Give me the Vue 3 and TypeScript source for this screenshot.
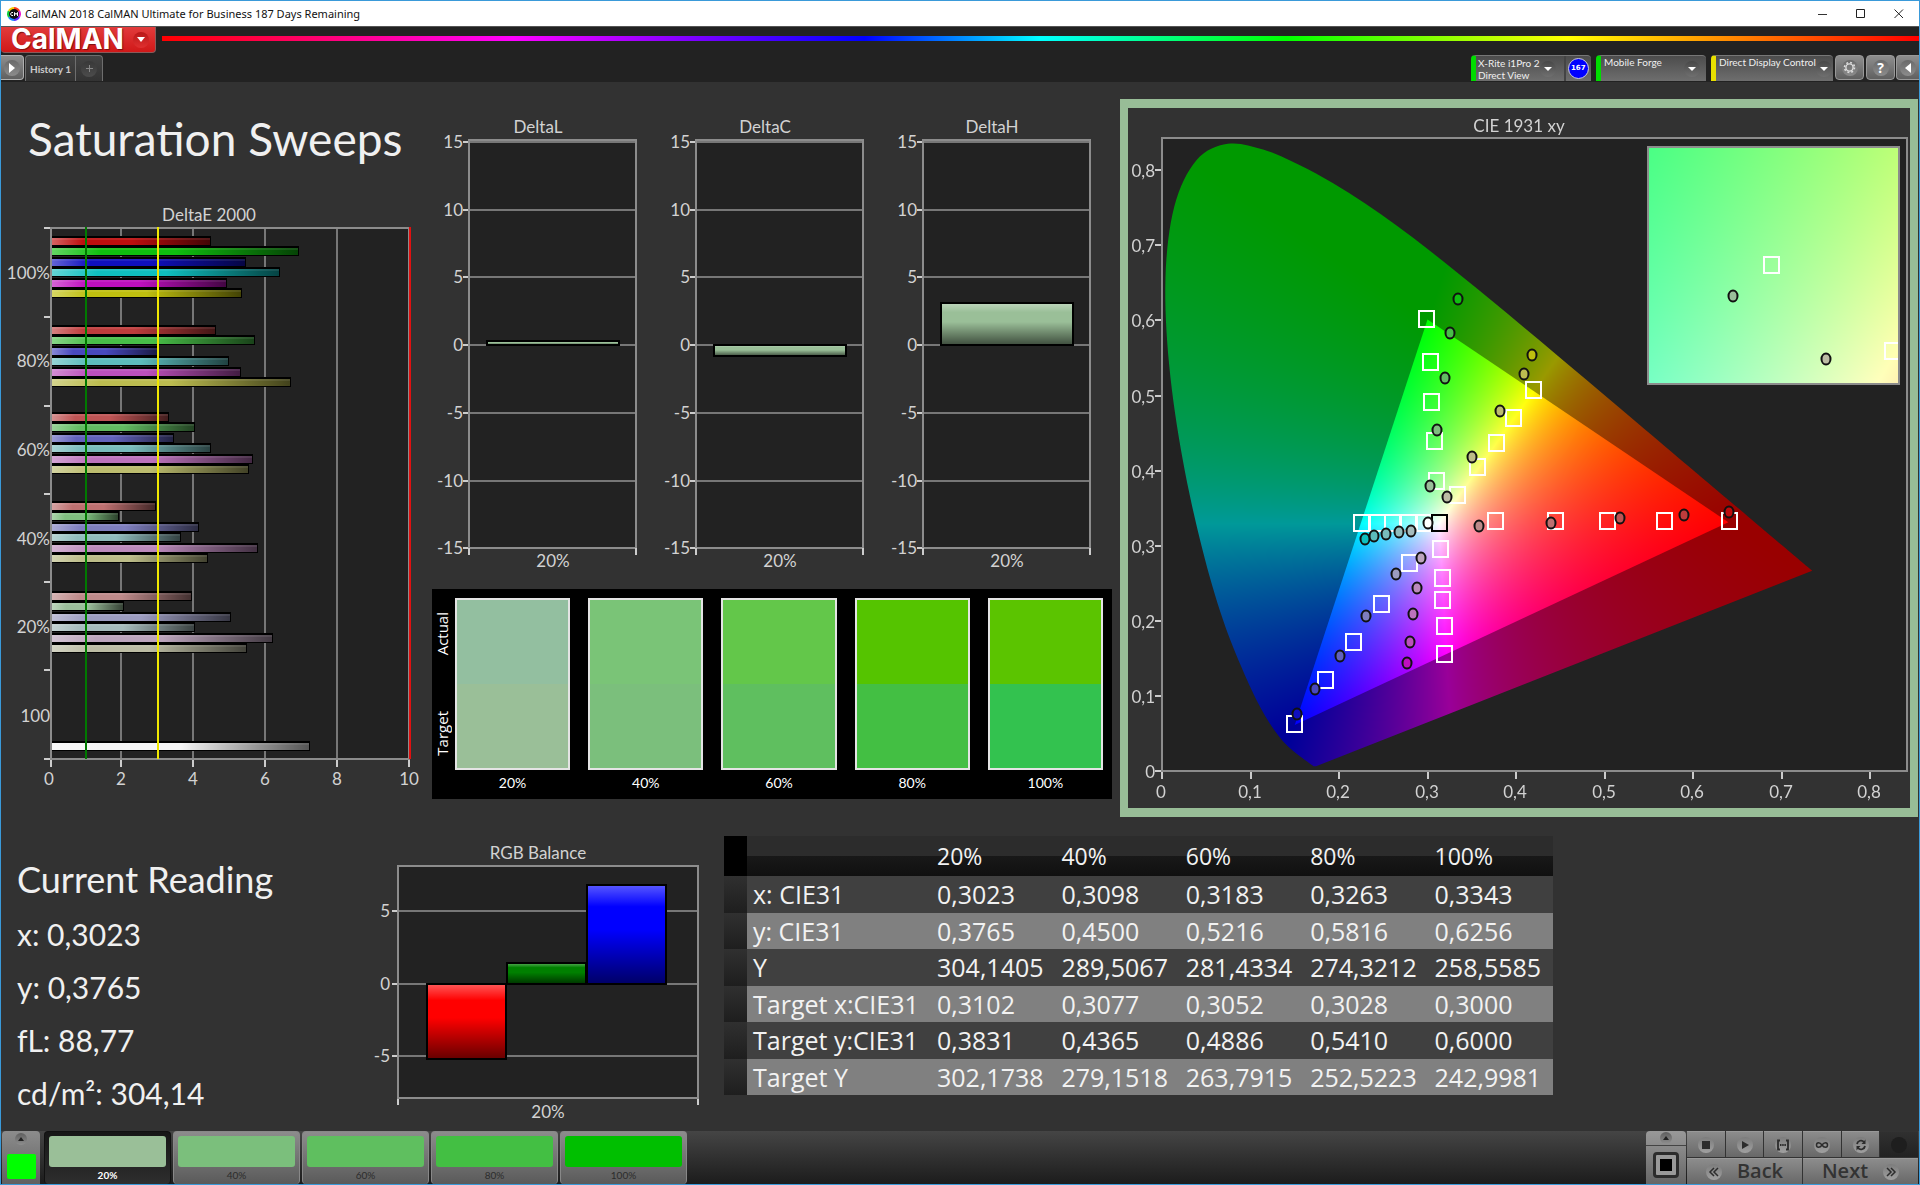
<script setup lang="ts">
import { onMounted, ref } from 'vue'

type Point = [number, number]

// Series order inside every saturation group: red, green, blue, cyan, magenta, yellow
const palette: Record<string, string[]> = {
  '100%': ['#be0e0e', '#0fbf0f', '#0f0fbf', '#0fbfbf', '#bf0fbf', '#bfbf0f'],
  '80%': ['#be3c3c', '#48be48', '#4848be', '#5cbcbc', '#bc50bc', '#bcbc50'],
  '60%': ['#be5454', '#62bc62', '#6262bc', '#78bcbc', '#bc72bc', '#bcbc6e'],
  '40%': ['#be7070', '#7ebe7e', '#7e7ebe', '#90bcbc', '#bc8abc', '#bcbc88'],
  '20%': ['#be8a8a', '#9abe9a', '#9c9cc0', '#a6bcbc', '#bca4bc', '#bcbca4'],
}
const levels = ['100%', '80%', '60%', '40%', '20%']

/* DeltaE 2000 chart */
const deltaE = [
  { label: '100%', top: 37, base: 79, ends: [210, 298, 245, 279, 226, 241] },
  { label: '80%', top: 126, base: 167, ends: [215, 254, 158, 228, 240, 290] },
  { label: '60%', top: 213, base: 256, ends: [168, 194, 173, 210, 252, 248] },
  { label: '40%', top: 302, base: 345, ends: [155, 118, 198, 180, 257, 207] },
  { label: '20%', top: 392, base: 433, ends: [191, 123, 230, 194, 272, 246] },
]
const barOffsets = [0, 10, 21, 31, 42, 52]
const deltaEBars = deltaE.flatMap((g) =>
  g.ends.map((end, i) => ({
    y: g.top + barOffsets[i],
    width: end - 51,
    color: palette[g.label][i],
  })),
)
deltaEBars.push({ y: 542, width: 258, color: '#f4f4f4' })
const groupTicks = [28, 117, 206, 294, 382, 470, 559]

/* DeltaL / DeltaC / DeltaH charts */
const deltaCharts = [
  { title: 'DeltaL', y: 231, height: 4 },
  { title: 'DeltaC', y: 235, height: 11 },
  { title: 'DeltaH', y: 193, height: 42 },
]
const deltaTicks = [
  { label: '15', y: 32 },
  { label: '10', y: 100 },
  { label: '5', y: 167 },
  { label: '0', y: 235 },
  { label: '-5', y: 303 },
  { label: '-10', y: 371 },
  { label: '-15', y: 438 },
]

const swatches = [
  { label: '20%', actual: '#93bfa0', target: '#9abf98' },
  { label: '40%', actual: '#7ac477', target: '#7bbf7c' },
  { label: '60%', actual: '#63c74a', target: '#5fbf5f' },
  { label: '80%', actual: '#55c400', target: '#43bf43' },
  { label: '100%', actual: '#5bc400', target: '#33c24f' },
]

/* CIE 1931 chart */
const cx = (x: number) => Math.round(34 + 885 * x)
const cy = (y: number) => Math.round(663 - 751 * y)

const targets: Point[] = [
  [0.6402, 0.3324], [0.5673, 0.3324], [0.5031, 0.3324], [0.4436, 0.3324], [0.3764, 0.3324],
  [0.2988, 0.6023], [0.3023, 0.5442], [0.3035, 0.4909], [0.3076, 0.4394], [0.3093, 0.3861],
  [0.1488, 0.0626], [0.1838, 0.1207], [0.2154, 0.1718], [0.2475, 0.2224], [0.2796, 0.2765],
  [0.2243, 0.3302], [0.2424, 0.3302], [0.2604, 0.3302], [0.2783, 0.3302], [0.2955, 0.3302],
  [0.3192, 0.1553], [0.3181, 0.1926], [0.3163, 0.2273], [0.3163, 0.2574], [0.3146, 0.2952],
  [0.419, 0.5069], [0.3969, 0.47], [0.377, 0.4372], [0.3554, 0.4043], [0.3338, 0.3675],
]
const measured: Point[][] = [
  [[0.6397, 0.3444], [0.5889, 0.3413], [0.5159, 0.3369], [0.4383, 0.3302], [0.3572, 0.3258]],
  [[0.3338, 0.628], [0.3245, 0.5837], [0.3181, 0.5233], [0.3093, 0.4536], [0.3017, 0.379]],
  [[0.1517, 0.0759], [0.1716, 0.1087], [0.1996, 0.1531], [0.2294, 0.2068], [0.2632, 0.2628]],
  [[0.2282, 0.3089], [0.2387, 0.3134], [0.2515, 0.316], [0.2667, 0.3187], [0.2807, 0.32]],
  [[0.2755, 0.1434], [0.279, 0.1713], [0.2825, 0.2091], [0.2871, 0.2441], [0.2912, 0.2832]],
  [[0.4167, 0.5539], [0.408, 0.5282], [0.3811, 0.4789], [0.3496, 0.4185], [0.3204, 0.3653]],
]
const measuredPoints = measured.flatMap((series, s) =>
  series.map(([x, y], i) => ({ x: cx(x) + 1, y: cy(y), color: palette[levels[i]][s] })),
)
const cieXTicks = ['0', '0,1', '0,2', '0,3', '0,4', '0,5', '0,6', '0,7', '0,8'].map((label, i) => ({
  label,
  x: cx(i / 10),
}))
const cieYTicks = ['0', '0,1', '0,2', '0,3', '0,4', '0,5', '0,6', '0,7', '0,8'].map((label, i) => ({
  label,
  y: cy(i / 10),
}))

const locus: Point[] = [
  [0.1741, 0.005], [0.1714, 0.0051], [0.1689, 0.0069], [0.1644, 0.0109], [0.1566, 0.0177],
  [0.144, 0.0297], [0.1355, 0.0399], [0.1241, 0.0578], [0.1096, 0.0868], [0.0913, 0.1327],
  [0.0687, 0.2007], [0.0454, 0.295], [0.0235, 0.4127], [0.0082, 0.5384], [0.0039, 0.6548],
  [0.0139, 0.7502], [0.0389, 0.812], [0.0743, 0.8338], [0.1142, 0.8262], [0.1547, 0.8059],
  [0.1929, 0.7816], [0.2296, 0.7543], [0.2658, 0.7243], [0.3016, 0.6923], [0.3373, 0.6589],
  [0.3731, 0.6245], [0.4087, 0.5896], [0.4441, 0.5547], [0.4788, 0.5202], [0.5125, 0.4866],
  [0.5448, 0.4544], [0.5752, 0.4242], [0.6029, 0.3965], [0.627, 0.3725], [0.6658, 0.334],
  [0.6915, 0.3083], [0.7079, 0.292], [0.719, 0.2809], [0.7347, 0.2653],
]

const cieCanvas = ref<HTMLCanvasElement | null>(null)

// Linear sRGB for a chromaticity, scaled so that the largest channel equals `level`
function chromaToRgb(x: number, y: number, level: number): [number, number, number] {
  const X = x / y
  const Z = (1 - x - y) / y
  const r = Math.max(0, 3.2406 * X - 1.5372 - 0.4986 * Z)
  const g = Math.max(0, -0.9689 * X + 1.8758 + 0.0415 * Z)
  const b = Math.max(0, 0.0557 * X - 0.204 + 1.057 * Z)
  const k = (level * 255) / Math.max(r, g, b)
  return [r * k, g * k, b * k]
}

function paint(width: number, height: number, level: number, toXy: (px: number, py: number) => Point) {
  const layer = document.createElement('canvas')
  layer.width = width
  layer.height = height
  const ctx = layer.getContext('2d')!
  const image = ctx.createImageData(width, height)
  for (let py = 0; py < height; py++) {
    for (let px = 0; px < width; px++) {
      const [x, y] = toXy(px, py)
      const [r, g, b] = chromaToRgb(x, Math.max(y, 0.001), level)
      const o = (py * width + px) * 4
      image.data[o] = r
      image.data[o + 1] = g
      image.data[o + 2] = b
      image.data[o + 3] = 255
    }
  }
  ctx.putImageData(image, 0, 0)
  return layer
}

onMounted(() => {
  const canvas = cieCanvas.value
  if (!canvas) return
  const ctx = canvas.getContext('2d')!
  const { width, height } = canvas
  const X = (x: number) => 34 + 885 * x
  const Y = (y: number) => 662 - 751 * y
  const toXy = (px: number, py: number): Point => [(px - 34) / 885, (662 - py) / 751]

  ctx.save()
  ctx.beginPath()
  ctx.moveTo(X(locus[0][0]), Y(locus[0][1]))
  for (let i = 0; i < locus.length - 1; i++) {
    const p0 = locus[Math.max(i - 1, 0)]
    const p1 = locus[i]
    const p2 = locus[i + 1]
    const p3 = locus[Math.min(i + 2, locus.length - 1)]
    ctx.bezierCurveTo(
      X(p1[0] + (p2[0] - p0[0]) / 6), Y(p1[1] + (p2[1] - p0[1]) / 6),
      X(p2[0] - (p3[0] - p1[0]) / 6), Y(p2[1] - (p3[1] - p1[1]) / 6),
      X(p2[0]), Y(p2[1]),
    )
  }
  ctx.closePath()
  ctx.clip()
  ctx.drawImage(paint(width, height, 0.6, toXy), 0, 0)
  ctx.beginPath()
  ctx.moveTo(X(0.64), Y(0.33))
  ctx.lineTo(X(0.3), Y(0.6))
  ctx.lineTo(X(0.15), Y(0.06))
  ctx.closePath()
  ctx.clip()
  ctx.drawImage(paint(width, height, 1, toXy), 0, 0)
  ctx.restore()

  // Magnified view round the selected target
  const zoom = paint(249, 235, 1, (px, py) => [0.3102 + (px - 124) / 4950, 0.3831 - (py - 117) / 5000])
  ctx.drawImage(zoom, 521, 40)
})

/* RGB balance chart */
const rgbTicks = [
  { label: '5', y: 75 },
  { label: '0', y: 148 },
  { label: '-5', y: 220 },
]
const rgbBars = [
  { x: 62, y: 148, height: 75, color: '#ff0000' },
  { x: 142, y: 127, height: 21, color: '#008000' },
  { x: 222, y: 49, height: 99, color: '#0000ff' },
]

const readings = ['x: 0,3023', 'y: 0,3765', 'fL: 88,77', 'cd/m²: 304,14']

const columns = ['20%', '40%', '60%', '80%', '100%']
const rows = [
  { name: 'x: CIE31', values: ['0,3023', '0,3098', '0,3183', '0,3263', '0,3343'] },
  { name: 'y: CIE31', values: ['0,3765', '0,4500', '0,5216', '0,5816', '0,6256'] },
  { name: 'Y', values: ['304,1405', '289,5067', '281,4334', '274,3212', '258,5585'] },
  { name: 'Target x:CIE31', values: ['0,3102', '0,3077', '0,3052', '0,3028', '0,3000'] },
  { name: 'Target y:CIE31', values: ['0,3831', '0,4365', '0,4886', '0,5410', '0,6000'] },
  { name: 'Target Y', values: ['302,1738', '279,1518', '263,7915', '252,5223', '242,9981'] },
]

const patches = [
  { label: '20%', color: '#9abf98' },
  { label: '40%', color: '#7bbf7c' },
  { label: '60%', color: '#5fbf5f' },
  { label: '80%', color: '#43bf43' },
  { label: '100%', color: '#00bf00' },
]
const selectedPatch = ref('20%')
</script>

<template>
  <div class="window">
    <header class="titlebar">
      <svg class="app-icon" width="14" height="14" viewBox="0 0 14 14" aria-hidden="true">
        <path d="M7 0A7 7 0 0 1 13 3.5L7 7Z" fill="#ff3b1f" />
        <path d="M13 3.5A7 7 0 0 1 13 10.5L7 7Z" fill="#e81ad0" />
        <path d="M13 10.5A7 7 0 0 1 7 14L7 7Z" fill="#5a2bff" />
        <path d="M7 14A7 7 0 0 1 1 10.5L7 7Z" fill="#1a8cff" />
        <path d="M1 10.5A7 7 0 0 1 1 3.5L7 7Z" fill="#10d040" />
        <path d="M1 3.5A7 7 0 0 1 7 0L7 7Z" fill="#f5d000" />
        <circle cx="7" cy="7" r="5" fill="#111" />
        <path d="M6 5.5H4.5L3.5 7L4.5 8.5H6M7.5 9V5.5L9 7.5L10.5 5.5V9" fill="none" stroke="#fff" />
      </svg>
      <span class="window-title">CalMAN 2018 CalMAN Ultimate for Business 187 Days Remaining</span>
      <div class="window-buttons">
        <button type="button" aria-label="Minimize">
          <svg width="10" height="10" viewBox="0 0 10 10"><path d="M0 5.5H9" stroke="#333" /></svg>
        </button>
        <button type="button" aria-label="Maximize">
          <svg width="10" height="10" viewBox="0 0 10 10"><path d="M.5.5H8.5V8.5H.5Z" fill="none" stroke="#222" /></svg>
        </button>
        <button type="button" aria-label="Close">
          <svg width="10" height="10" viewBox="0 0 10 10"><path d="M.5.5L9 9M9 .5L.5 9" stroke="#222" /></svg>
        </button>
      </div>
    </header>

    <div class="brand-row">
      <button type="button" class="brand">
        <span>CalMAN</span>
        <i class="knob red"><svg width="8" height="5" viewBox="0 0 8 5"><path d="M0 0H8L4 5Z" fill="#fff" /></svg></i>
      </button>
      <div class="rainbow"></div>
    </div>

    <nav class="toolbar">
      <button type="button" class="square-btn" aria-label="Expand">
        <i class="knob"><svg width="6" height="10" viewBox="0 0 6 10"><path d="M0 0L6 5L0 10Z" fill="#fff" /></svg></i>
      </button>
      <div class="history">
        <button type="button" class="history-tab">History 1</button>
        <button type="button" class="history-add" aria-label="Add history">
          <i class="knob dim"><svg width="7" height="7" viewBox="0 0 7 7"><path d="M0 3.5H7M3.5 0V7" stroke="#888" /></svg></i>
        </button>
      </div>
      <div class="devices">
        <div class="device meter">
          <button type="button" class="device-name">
            <span>X-Rite i1Pro 2<br />Direct View</span>
            <i class="knob shade"><svg width="8" height="4" viewBox="0 0 8 4"><path d="M0 0H8L4 4Z" fill="#fff" /></svg></i>
          </button>
          <button type="button" class="count"><b>167</b></button>
        </div>
        <button type="button" class="device source">
          <span>Mobile Forge</span>
          <i class="knob shade"><svg width="8" height="4" viewBox="0 0 8 4"><path d="M0 0H8L4 4Z" fill="#fff" /></svg></i>
        </button>
        <button type="button" class="device display">
          <span>Direct Display Control</span>
          <i class="knob shade"><svg width="8" height="4" viewBox="0 0 8 4"><path d="M0 0H8L4 4Z" fill="#fff" /></svg></i>
        </button>
        <button type="button" class="square-btn tool" aria-label="Settings">
          <i class="knob">
            <svg width="13" height="13" viewBox="0 0 13 13" fill="none" stroke="#ddd">
              <circle cx="6.5" cy="6.5" r="3.6" stroke-width="1.4" />
              <circle cx="6.5" cy="6.5" r="5" stroke-width="1.6" stroke-dasharray="1.9 2.03" />
            </svg>
          </i>
        </button>
        <button type="button" class="square-btn tool" aria-label="Help"><i class="knob"><b>?</b></i></button>
        <button type="button" class="square-btn tool last" aria-label="Collapse">
          <i class="knob"><svg width="6" height="10" viewBox="0 0 6 10"><path d="M6 0L0 5L6 10Z" fill="#fff" /></svg></i>
        </button>
      </div>
    </nav>

    <main>
      <div class="top">
        <section class="left">
          <h1>Saturation Sweeps</h1>
          <svg class="chart" viewBox="0 0 429 590" role="img" aria-label="DeltaE 2000">
            <defs>
              <linearGradient id="shadeX">
                <stop offset="0" stop-color="#fff" stop-opacity=".35" />
                <stop offset=".2" stop-color="#fff" stop-opacity="0" />
                <stop offset=".5" stop-color="#000" stop-opacity="0" />
                <stop offset="1" stop-color="#000" stop-opacity=".65" />
              </linearGradient>
              <linearGradient id="shadeY" x2="0" y2="1">
                <stop offset="0" stop-color="#fff" stop-opacity=".35" />
                <stop offset=".22" stop-color="#fff" stop-opacity="0" />
                <stop offset=".45" stop-color="#000" stop-opacity="0" />
                <stop offset="1" stop-color="#000" stop-opacity=".6" />
              </linearGradient>
            </defs>
            <text class="title" x="208" y="21" text-anchor="middle">DeltaE 2000</text>
            <rect x="50" y="28" width="358" height="531" fill="#222" />
            <g class="grid">
              <line v-for="i in 4" :key="i" :x1="48 + i * 72" :x2="48 + i * 72" y1="28" y2="559" />
            </g>
            <g class="ticks">
              <line v-for="y in groupTicks" :key="y" x1="43" x2="50" :y1="y" :y2="y" />
              <line x1="50" x2="50" y1="559" y2="567" />
              <line v-for="i in 5" :key="i" :x1="48 + i * 72" :x2="48 + i * 72" y1="559" y2="567" />
            </g>
            <rect class="frame" x="50" y="28" width="358" height="531" />
            <g class="crisp">
              <template v-for="(bar, i) in deltaEBars" :key="i">
                <rect x="51" :y="bar.y - 1" :width="bar.width" height="10" fill="#000" />
                <rect x="51" :y="bar.y + 1" :width="bar.width - 1" height="7" :fill="bar.color" />
                <rect x="51" :y="bar.y + 1" :width="bar.width - 1" height="7" fill="url(#shadeX)" />
                <rect x="51" :y="bar.y + 1" :width="bar.width - 1" height="2" fill="#fff" fill-opacity=".08" />
              </template>
            </g>
            <line class="limit" x1="85" x2="85" y1="27" y2="559" stroke="#007a00" />
            <line class="limit" x1="157" x2="157" y1="27" y2="559" stroke="#f0e800" />
            <line class="limit" x1="409" x2="409" y1="27" y2="559" stroke="#e01010" />
            <text v-for="g in deltaE" :key="g.label" x="49" :y="g.base" text-anchor="end">{{ g.label }}</text>
            <text x="49" y="522" text-anchor="end">100</text>
            <text v-for="i in 6" :key="i" :x="(i - 1) * 72 + 48" y="585" text-anchor="middle">{{ (i - 1) * 2 }}</text>
          </svg>
        </section>

        <section class="middle">
          <div class="deltas">
            <svg v-for="c in deltaCharts" :key="c.title" class="chart" viewBox="0 0 227 465" role="img" :aria-label="c.title">
              <text class="title" x="108" y="23" text-anchor="middle">{{ c.title }}</text>
              <rect x="39" y="30" width="167" height="408" fill="#222" />
              <rect x="39" y="30" width="167" height="2" fill="#555" />
              <g class="grid">
                <line v-for="t in deltaTicks" :key="t.label" x1="39" x2="206" :y1="t.y" :y2="t.y" />
              </g>
              <g class="ticks">
                <line v-for="t in deltaTicks" :key="t.label" x1="33" x2="39" :y1="t.y" :y2="t.y" />
              </g>
              <path class="frame" d="M39 30H206V438H39Z" />
              <path class="ticks" d="M39 438V445M206 438V445" />
              <rect class="bar" x="57" :y="c.y" width="132" :height="c.height" fill="#9abf98" />
              <rect class="bar" x="57" :y="c.y" width="132" :height="c.height" fill="url(#shadeY)" />
              <text v-for="t in deltaTicks" :key="t.label" x="33" :y="t.y + 6" text-anchor="end">{{ t.label }}</text>
              <text x="123" y="457" text-anchor="middle">20%</text>
            </svg>
          </div>
          <div class="swatches">
            <div class="swatch-side"><span>Actual</span><span>Target</span></div>
            <figure v-for="s in swatches" :key="s.label">
              <div class="swatch">
                <div :style="{ background: s.actual }"></div>
                <div :style="{ background: s.target }"></div>
              </div>
              <figcaption>{{ s.label }}</figcaption>
            </figure>
          </div>
        </section>

        <section class="cie">
          <svg class="chart" viewBox="0 0 782 700" aria-hidden="true">
            <rect x="34" y="30" width="745" height="633" fill="#222" />
          </svg>
          <canvas ref="cieCanvas" width="782" height="700"></canvas>
          <svg class="chart" viewBox="0 0 782 700" role="img" aria-label="CIE 1931 xy">
            <defs>
              <clipPath id="insetClip"><rect x="521" y="40" width="249" height="235" /></clipPath>
            </defs>
            <text class="title" x="391" y="24" text-anchor="middle">CIE 1931 xy</text>
            <rect class="frame" x="34" y="30" width="745" height="633" />
            <g class="ticks">
              <line v-for="t in cieXTicks" :key="t.label" :x1="t.x" :x2="t.x" y1="664" y2="671" />
              <line v-for="t in cieYTicks" :key="t.label" x1="27" x2="33" :y1="t.y" :y2="t.y" />
            </g>
            <text v-for="t in cieXTicks" :key="t.label" :x="t.x - 1" y="690" text-anchor="middle">{{ t.label }}</text>
            <text v-for="t in cieYTicks" :key="t.label" x="27" :y="t.y + 7" text-anchor="end">{{ t.label }}</text>

            <g class="target">
              <rect v-for="(t, i) in targets" :key="i" :x="cx(t[0]) - 7" :y="cy(t[1]) - 8" width="15" height="16" />
              <rect class="white-point" x="304" y="407" width="15" height="16" />
            </g>
            <g class="measured">
              <ellipse v-for="(p, i) in measuredPoints" :key="i" :cx="p.x" :cy="p.y" rx="4.5" ry="5.5" :fill="p.color" />
              <ellipse cx="300" cy="415" rx="4.5" ry="5.5" fill="#fff" />
            </g>

            <rect class="frame" x="520" y="39" width="251" height="237" />
            <g clip-path="url(#insetClip)">
              <g class="target">
                <rect x="636" y="149" width="15" height="16" />
                <rect x="757" y="235" width="15" height="16" />
              </g>
              <g class="measured">
                <ellipse cx="605" cy="188" rx="4.5" ry="5.5" fill="#9abe9a" />
                <ellipse cx="698" cy="251" rx="4.5" ry="5.5" fill="#bcbca4" />
              </g>
            </g>
          </svg>
        </section>
      </div>

      <div class="bottom">
        <section class="reading">
          <h2>Current Reading</h2>
          <p v-for="r in readings" :key="r">{{ r }}</p>
        </section>

        <section>
          <svg class="chart" viewBox="0 0 359 290" role="img" aria-label="RGB Balance">
            <text class="title" x="173" y="23" text-anchor="middle">RGB Balance</text>
            <rect x="33" y="30" width="300" height="232" fill="#222" />
            <g class="grid">
              <line v-for="t in rgbTicks" :key="t.label" x1="33" x2="333" :y1="t.y" :y2="t.y" />
            </g>
            <g class="ticks">
              <line v-for="t in rgbTicks" :key="t.label" x1="27" x2="33" :y1="t.y" :y2="t.y" />
            </g>
            <rect class="frame" x="33" y="30" width="300" height="232" />
            <path class="ticks" d="M33 263V269M333 263V269" />
            <template v-for="b in rgbBars" :key="b.color">
              <rect class="bar" :x="b.x" :y="b.y" width="79" :height="b.height" :fill="b.color" />
              <rect class="bar" :x="b.x" :y="b.y" width="79" :height="b.height" fill="url(#shadeY)" />
            </template>
            <text v-for="t in rgbTicks" :key="t.label" x="25" :y="t.y + 6" text-anchor="end">{{ t.label }}</text>
            <text x="183" y="282" text-anchor="middle">20%</text>
          </svg>
        </section>

        <table>
          <colgroup>
            <col class="col-mark" />
            <col class="col-name" />
            <col v-for="c in columns" :key="c" />
          </colgroup>
          <thead>
            <tr>
              <td class="mark"></td>
              <td></td>
              <th v-for="c in columns" :key="c" scope="col">{{ c }}</th>
            </tr>
          </thead>
          <tbody>
            <tr v-for="row in rows" :key="row.name">
              <td class="mark"></td>
              <th scope="row">{{ row.name }}</th>
              <td v-for="(v, i) in row.values" :key="i">{{ v }}</td>
            </tr>
          </tbody>
        </table>
      </div>
    </main>

    <footer>
      <button type="button" class="swatch-toggle" aria-label="Pattern window">
        <i class="up"><svg width="6" height="4" viewBox="0 0 6 4"><path d="M0 4L3 0L6 4Z" fill="#222" /></svg></i>
        <span class="live"></span>
      </button>
      <div class="patches">
        <button
          v-for="p in patches"
          :key="p.label"
          type="button"
          class="patch"
          :class="{ selected: p.label === selectedPatch }"
          @click="selectedPatch = p.label"
        >
          <span class="patch-color" :style="{ background: p.color }"></span>
          <span>{{ p.label }}</span>
        </button>
      </div>
      <div class="transport">
        <div class="stop-box">
          <button type="button" class="stop-top" aria-label="More"><i class="up"><svg width="6" height="4" viewBox="0 0 6 4"><path d="M0 4L3 0L6 4Z" fill="#222" /></svg></i></button>
          <button type="button" class="stop-main" aria-label="Stop pattern"><span></span></button>
        </div>
        <div class="controls">
          <div class="row">
            <button type="button" aria-label="Stop"><i class="disc"><svg width="16" height="16" viewBox="0 0 16 16"><path d="M4 4H12V12H4Z" fill="#2c2c2c" /></svg></i></button>
            <button type="button" aria-label="Play"><i class="disc"><svg width="16" height="16" viewBox="0 0 16 16"><path d="M5 4L12 8L5 12Z" fill="#2c2c2c" /></svg></i></button>
            <button type="button" aria-label="Read series">
              <i class="disc">
                <svg width="16" height="16" viewBox="0 0 16 16" fill="none" stroke="#2c2c2c" stroke-width="1.8">
                  <path d="M5 3.5H3V12.5H5M11 3.5H13V12.5H11" /><path d="M5 8H11" stroke-dasharray="1.5 .7" />
                </svg>
              </i>
            </button>
            <button type="button" aria-label="Continuous">
              <i class="disc">
                <svg width="16" height="16" viewBox="0 0 16 16" fill="none" stroke="#2c2c2c" stroke-width="1.5">
                  <path d="M8 8C6 5 2.500 5 2.500 8S6 11 8 8S13.500 5 13.500 8S10 11 8 8Z" />
                </svg>
              </i>
            </button>
            <button type="button" aria-label="Repeat">
              <i class="disc">
                <svg width="16" height="16" viewBox="0 0 16 16" fill="none" stroke="#2c2c2c" stroke-width="1.8">
                  <path d="M4 7A4 4 0 0 1 11 5M12 9A4 4 0 0 1 5 11" />
                  <path d="M12.5 2.500V7H8.500ZM3.500 13.500V9H7.500Z" fill="#2c2c2c" stroke="none" />
                </svg>
              </i>
            </button>
            <button type="button" class="off" aria-label="Unavailable" disabled><i class="disc"></i></button>
          </div>
          <div class="row nav">
            <button type="button">
              <i class="disc"><svg width="12" height="12" viewBox="0 0 12 12" fill="none" stroke="#2c2c2c" stroke-width="1.5"><path d="M6 2L2 6L6 10M10 2L6 6L10 10" /></svg></i>
              <span>Back</span>
            </button>
            <button type="button">
              <span>Next</span>
              <i class="disc"><svg width="12" height="12" viewBox="0 0 12 12" fill="none" stroke="#2c2c2c" stroke-width="1.5"><path d="M2 2L6 6L2 10M6 2L10 6L6 10" /></svg></i>
            </button>
          </div>
        </div>
      </div>
    </footer>
  </div>
</template>

<style>
body {
  margin: 0;
  background: #323232;
}
</style>

<style scoped>
.window {
  box-sizing: border-box;
  min-height: 100vh;
  display: flex;
  flex-direction: column;
  border: 1px solid #3a9ad9;
  background: #323232;
  color: #eee;
  font-family: Lato, "Open Sans", sans-serif;
}
button {
  margin: 0;
  padding: 0;
  border: 0;
  background: none;
  color: inherit;
  font: inherit;
}
svg {
  display: block;
}

/* Title bar */
.titlebar {
  display: flex;
  align-items: center;
  height: 25px;
  padding-left: 6px;
  background: #fff;
  color: #111;
}
.window-title {
  flex: 1;
  padding-left: 4px;
  font: 11px/24px "Noto Sans", "Open Sans", sans-serif;
}
.window-buttons {
  display: flex;
  gap: 28px;
  padding-right: 15px;
}

/* Brand and rainbow */
.brand-row {
  display: flex;
  align-items: center;
  height: 29px;
  background: #222;
  border-top: 1px solid #555;
  box-sizing: border-box;
}
.brand {
  display: flex;
  align-items: center;
  align-self: flex-start;
  justify-content: space-between;
  box-sizing: border-box;
  width: 155px;
  height: 26px;
  padding: 0 6px 0 10px;
  border: 1px solid #8a5a5a;
  border-top: 0;
  border-left: 0;
  border-radius: 0 0 4px 4px;
  background: linear-gradient(#e23c3c, #d01818);
  color: #fff;
  font: 700 28px/24px Inter, sans-serif;
}
.brand span {
  padding-bottom: 2px;
  text-shadow: 1px 1px 1px #7a1010;
}
.rainbow {
  flex: 1;
  height: 5px;
  margin: 0 0 5px 6px;
  background: linear-gradient(90deg, #f00, #f0f 20%, #00f 40%, #0ff 50%, #0f0 64%, #ff0 80%, #f00);
}
.knob {
  display: flex;
  align-items: center;
  justify-content: center;
  flex: none;
  width: 16px;
  height: 16px;
  border-radius: 50%;
  background: linear-gradient(#6a6a6a, #8c8c8c);
  font-style: normal;
}
.knob.red {
  background: linear-gradient(#b81818, #e03030);
}
.knob.dim {
  background: linear-gradient(#383838, #4c4c4c);
}
.knob.shade {
  background: linear-gradient(#484848, #707070);
}

/* Toolbar */
.toolbar {
  display: flex;
  align-items: flex-start;
  height: 27px;
  background: #222;
  font: 10px/12px Lato, sans-serif;
  color: #f0f0f0;
}
.square-btn {
  display: flex;
  align-items: center;
  justify-content: center;
  box-sizing: border-box;
  width: 23px;
  height: 25px;
  border: 1px solid #b0b0b0;
  border-left: 0;
  border-radius: 0 4px 4px 0;
  background: linear-gradient(#8e8e8e, #606060);
}
.square-btn.tool {
  width: 29px;
  margin-left: 2px;
  border: 1px solid #999;
  border-radius: 4px;
}
.square-btn.last {
  width: 23px;
  margin-left: 1px;
  border-right: 0;
  border-radius: 4px 0 0 4px;
}
.square-btn b {
  color: #fff;
  font: 700 14px/16px "Open Sans", sans-serif;
}
.history {
  display: flex;
  box-sizing: border-box;
  height: 26px;
  margin-left: 1px;
  border: 1px solid #6e6e6e;
  border-bottom: 0;
  border-radius: 4px 4px 0 0;
  background: linear-gradient(#444, #333);
}
.history-tab {
  width: 49px;
  color: #ccc;
  font-weight: 700;
  white-space: nowrap;
}
.history-add {
  display: flex;
  align-items: center;
  justify-content: center;
  box-sizing: border-box;
  width: 27px;
  border-left: 1px solid #6e6e6e;
}
.devices {
  display: flex;
  margin-left: auto;
}
.device {
  display: flex;
  align-items: center;
  justify-content: space-between;
  box-sizing: border-box;
  height: 26px;
  margin-right: 5px;
  border-top: 1px solid #777;
  border-left: 5px solid #0d0;
  border-radius: 4px 4px 0 0;
  background: linear-gradient(#4c4c4c, #6e6e6e);
  text-align: left;
}
.device span {
  align-self: flex-start;
  white-space: nowrap;
}
.device.meter {
  width: 120px;
}
.device-name {
  display: flex;
  flex: 1;
  align-items: center;
  justify-content: space-between;
  padding: 0 8px 0 2px;
  text-align: left;
}
.count {
  display: flex;
  align-items: center;
  justify-content: center;
  width: 29px;
  height: 25px;
  border-left: 2px solid #444;
}
.count b {
  width: 19px;
  height: 19px;
  border: 1px solid #ccd;
  border-radius: 50%;
  background: #00f;
  color: #fff;
  font: 700 7px/19px "DejaVu Sans", sans-serif;
  text-align: center;
}
.device.source {
  width: 110px;
  padding: 0 6px 0 3px;
}
.device.display {
  width: 122px;
  margin-right: 0;
  padding: 0 6px 0 3px;
  border-left-color: #e8e000;
}

/* Content grid */
main {
  flex: 1;
  background: #323232;
}
.top {
  display: grid;
  grid-template-columns: minmax(0, 429fr) minmax(0, 690fr) minmax(0, 798fr);
  align-items: start;
  padding-right: 1px;
}
.chart {
  width: 100%;
  height: auto;
}
.chart text {
  fill: #d2d2d2;
  font-size: 17px;
}
.grid line {
  stroke: #777;
  stroke-width: 2;
  shape-rendering: crispEdges;
}
.ticks,
.ticks line {
  stroke: #ccc;
  stroke-width: 2;
  shape-rendering: crispEdges;
}
.frame {
  fill: none;
  stroke: #8c8c8c;
  stroke-width: 2;
  shape-rendering: crispEdges;
}
.limit {
  stroke-width: 2;
  shape-rendering: crispEdges;
}
.crisp {
  shape-rendering: crispEdges;
}
.bar {
  stroke: #000;
  stroke-width: 2;
  shape-rendering: crispEdges;
}
h1 {
  margin: 0;
  padding: 21px 0 25px 27px;
  color: #f0f0f0;
  font-size: 46px;
  font-weight: 400;
  line-height: 72px;
  white-space: nowrap;
}
.middle {
  padding: 28px 9px 0 0;
}
.deltas {
  display: grid;
  grid-template-columns: repeat(3, minmax(0, 1fr));
}
.swatches {
  display: flex;
  gap: 18px;
  box-sizing: border-box;
  height: 210px;
  margin: 14px -1px 0 2px;
  padding: 9px 9px 0 0;
  background: #000;
}
.swatch-side {
  display: flex;
  justify-content: space-between;
  box-sizing: border-box;
  width: 23px;
  height: 172px;
  margin-right: -18px;
  padding: 14px 0;
  writing-mode: vertical-rl;
  font: 15px/20px "Open Sans", sans-serif;
  color: #fff;
}
.swatch-side span {
  transform: rotate(180deg);
}
.swatches figure {
  flex: 1;
  margin: 0;
}
.swatch {
  box-sizing: border-box;
  height: 172px;
  border: 2px solid #e4e4e4;
}
.swatch div {
  height: 50%;
}
figcaption {
  color: #fff;
  font-size: 14px;
  line-height: 26px;
  text-align: center;
}
.cie {
  display: grid;
  margin-top: 17px;
  border: solid #98bd97;
  border-width: 9px 8px;
}
.cie > * {
  grid-area: 1 / 1;
  width: 100%;
  height: auto;
}
.target rect {
  fill: none;
  stroke: #fff;
  stroke-width: 2;
}
.target .white-point {
  stroke: #000;
}
.measured ellipse {
  stroke: #111;
  stroke-width: 2;
}

.bottom {
  display: grid;
  grid-template-columns: minmax(0, 364fr) minmax(0, 359fr) minmax(0, 829fr) minmax(0, 366fr);
  align-items: start;
  padding-top: 19px;
}
.reading {
  padding: 15px 0 0 16px;
  color: #f0f0f0;
  white-space: nowrap;
}
h2 {
  margin: 0 0 1px;
  font-size: 36px;
  font-weight: 400;
  line-height: 56px;
}
.reading p {
  margin: 0;
  font-size: 30px;
  line-height: 53px;
}

table {
  width: 100%;
  height: 259px;
  border-collapse: collapse;
  table-layout: fixed;
  color: #f2f2f2;
  font: 25px/34px "Open Sans", sans-serif;
}
.col-mark {
  width: 23px;
}
.col-name {
  width: 184px;
}
th,
td {
  height: 36px;
  padding: 0 0 0 6px;
  font-weight: 400;
  text-align: left;
  white-space: nowrap;
}
thead tr {
  background: linear-gradient(#2c2c2c 50%, #181818 50%, #101010);
}
thead th {
  font-size: 23px;
}
thead th,
thead td {
  height: 40px;
}
thead .mark {
  background: #000;
}
tbody tr {
  background: #404040;
}
tbody tr:nth-child(even) {
  background: #808080;
}
tbody .mark {
  background: linear-gradient(#303030, #1e1e1e);
}

/* Footer */
footer {
  display: flex;
  height: 53px;
  background: linear-gradient(#454545, #1c1c1c);
}
.swatch-toggle {
  display: flex;
  flex-direction: column;
  align-items: center;
  justify-content: space-between;
  box-sizing: border-box;
  width: 38px;
  margin-left: 1px;
  padding: 2px 0 5px;
  border-radius: 4px 4px 0 0;
  background: linear-gradient(#8c8c8c, #606060);
}
.up {
  display: flex;
  align-items: center;
  justify-content: center;
  width: 12px;
  height: 12px;
  border-radius: 50%;
  background: linear-gradient(#5e5e5e, #8e8e8e);
}
.live {
  width: 29px;
  height: 25px;
  border-radius: 2px;
  background: #0f0;
}
.patches {
  display: flex;
  gap: 2px;
  margin-left: 4px;
}
.patch {
  display: flex;
  flex-direction: column;
  align-items: center;
  box-sizing: border-box;
  width: 127px;
  padding: 4px 4px 0;
  border: 1px solid #888;
  border-width: 1px 1px 0;
  border-radius: 4px;
  background: linear-gradient(#8c8c8c, #5a5a5a);
  color: #2c2c2c;
  font: 10px/16px Lato, sans-serif;
}
.patch.selected {
  border-color: #111;
  background: linear-gradient(#161616, #2e2e2e);
  color: #fff;
  font-weight: 700;
}
.patch-color {
  width: 100%;
  height: 31px;
  border-radius: 3px;
}
.transport {
  display: flex;
  gap: 1px;
  margin: 0 1px 0 auto;
}
.stop-box {
  display: flex;
  flex-direction: column;
  width: 40px;
  border-radius: 4px 4px 0 0;
  background: linear-gradient(#999, #666);
}
.stop-top {
  display: flex;
  align-items: center;
  justify-content: center;
  height: 15px;
  border-bottom: 1px solid #444;
}
.stop-main {
  display: flex;
  flex: 1;
  align-items: center;
  justify-content: center;
}
.stop-main span {
  box-sizing: border-box;
  width: 26px;
  height: 26px;
  border: 3px solid #2c2c2c;
  border-radius: 4px;
  background: linear-gradient(#000, #000) center / 12px 12px no-repeat, #999;
}
.controls {
  display: flex;
  flex-direction: column;
  gap: 1px;
  width: 231px;
  background: #333;
}
.row {
  display: flex;
  flex: 1;
  gap: 1px;
}
.row button {
  display: flex;
  flex: 1;
  align-items: center;
  justify-content: center;
  border-top: 1px solid #999;
  background: linear-gradient(#8c8c8c, #686868);
}
.row .off {
  border-color: #333;
  background: linear-gradient(#303030, #222);
}
.disc {
  display: flex;
  align-items: center;
  justify-content: center;
  width: 16px;
  height: 16px;
  border-radius: 50%;
  background: linear-gradient(#7c7c7c, #a0a0a0);
}
.off .disc {
  background: #1e1e1e;
}
.nav button {
  gap: 15px;
  color: #333;
  font: 600 20px/22px "Open Sans", sans-serif;
}
.nav span {
  padding-bottom: 2px;
}
</style>
